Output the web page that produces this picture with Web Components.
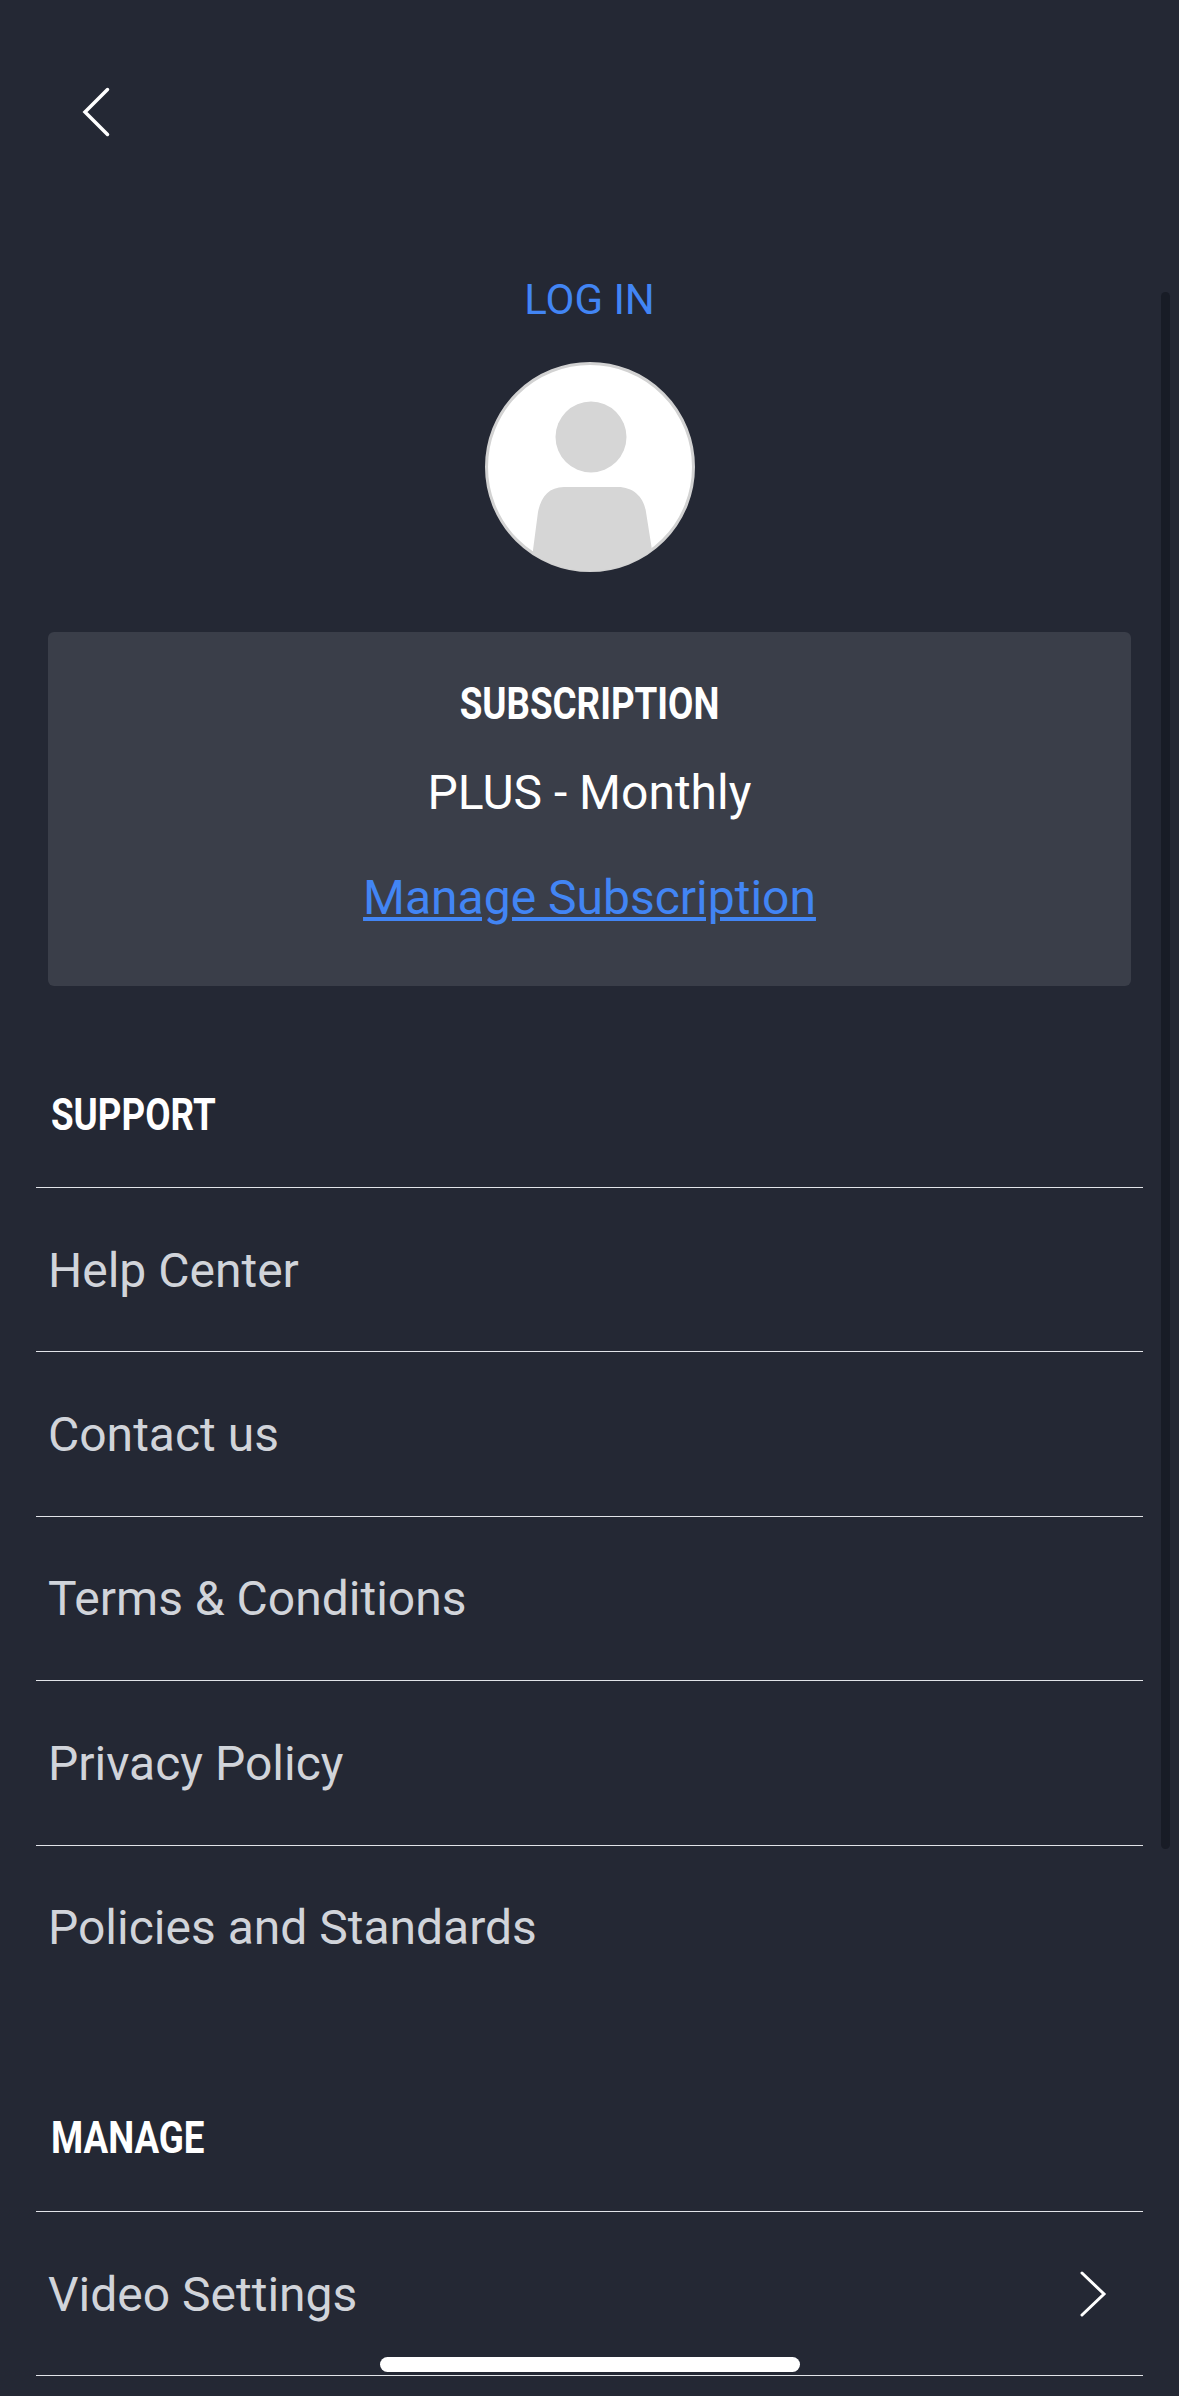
<!DOCTYPE html>
<html>
<head>
<meta charset="utf-8">
<title>Account</title>
<style>
  html, body { margin: 0; height: 100%; background: #242834; overflow: hidden; }
  body { font-family: Roboto, "Liberation Sans", sans-serif; }
</style>
</head>
<body>
<account-screen>
  <back-bar></back-bar>
  <profile-head></profile-head>
  <subscription-card plan="PLUS - Monthly"></subscription-card>
  <menu-section title="SUPPORT">
    <menu-row>Help Center</menu-row>
    <menu-row>Contact us</menu-row>
    <menu-row>Terms &amp; Conditions</menu-row>
    <menu-row>Privacy Policy</menu-row>
    <menu-row>Policies and Standards</menu-row>
  </menu-section>
  <menu-section title="MANAGE" class="manage">
    <menu-row arrow>Video Settings</menu-row>
    <menu-row></menu-row>
  </menu-section>
</account-screen>

<script>
// Scherm: vaste hoogte, inhoud loopt onderaan door
class AccountScreen extends HTMLElement {
  constructor() {
    super();
    this.attachShadow({ mode: 'open' });
  }

  connectedCallback() {
    this.shadowRoot.innerHTML = `
      <style>
        :host {
          display: block;
          position: relative;
          height: 2396px;
          overflow: hidden;
          background: #242834;
        }
        .scrollbar {
          position: absolute;
          left: 1161px;
          top: 292px;
          width: 9px;
          height: 1557px;
          border-radius: 5px;
          background: #181c26;
        }
        .home {
          position: absolute;
          left: 380px;
          top: 2357px;
          width: 420px;
          height: 15px;
          border-radius: 8px;
          background: #ffffff;
        }
      </style>
      <slot></slot>
      <div class="scrollbar"></div>
      <div class="home"></div>
    `;
  }
}

class BackBar extends HTMLElement {
  constructor() {
    super();
    this.attachShadow({ mode: 'open' });
  }

  connectedCallback() {
    this.shadowRoot.innerHTML = `
      <style>
        :host { display: block; padding: 86px 0 0 82px; height: 190px; box-sizing: border-box; }
        svg { display: block; }
      </style>
      <svg width="30" height="52" viewBox="0 0 30 52" fill="none" stroke="#ffffff" stroke-width="3.5" stroke-linecap="round" stroke-linejoin="miter">
        <path d="M25.5 3.5 L3 26 L25.5 48.5"/>
      </svg>
    `;
  }
}

class ProfileHead extends HTMLElement {
  constructor() {
    super();
    this.attachShadow({ mode: 'open' });
  }

  connectedCallback() {
    this.shadowRoot.innerHTML = `
      <style>
        :host { display: flex; flex-direction: column; align-items: center; }
        .login { font-size: 42px; line-height: 80px; height: 80px; margin-top: 70px; color: #4285f4; }
        svg { display: block; margin-top: 22px; }
      </style>
      <div class="login">LOG IN</div>
      <svg width="210" height="210" viewBox="0 0 210 210">
        <defs><clipPath id="av"><circle cx="105" cy="105" r="104"/></clipPath></defs>
        <circle cx="105" cy="105" r="103.5" fill="#ffffff" stroke="#d2d2d2" stroke-width="3"/>
        <g clip-path="url(#av)" fill="#d6d6d6">
          <circle cx="106" cy="75" r="35.5"/>
          <path d="M46 210 L48 188 L53 150 C56 135 64 125 79 125 L133 125 C148 125 159 135 161 150 L167 188 L168 210 Z"/>
        </g>
      </svg>
    `;
  }
}

class SubscriptionCard extends HTMLElement {
  constructor() {
    super();
    this.attachShadow({ mode: 'open' });
  }

  connectedCallback() {
    const plan = this.getAttribute('plan') || '';
    this.shadowRoot.innerHTML = `
      <style>
        :host {
          display: flex;
          flex-direction: column;
          align-items: center;
          box-sizing: border-box;
          width: 1083px;
          height: 354px;
          margin: 60px 0 0 48px;
          padding-top: 47px;
          border-radius: 6px;
          background: #3a3e49;
          color: #ffffff;
          text-align: center;
        }
        .title {
          font-size: 44px;
          line-height: 50px;
          font-weight: 700;
          transform: scaleX(.835);
          white-space: nowrap;
        }
        .plan { font-size: 48px; line-height: 56px; margin-top: 36px; }
        a { font-size: 48px; line-height: 56px; margin-top: 49px; color: #4285f4; text-decoration: underline; }
      </style>
      <div class="title">SUBSCRIPTION</div>
      <div class="plan">${plan}</div>
      <a href="#">Manage Subscription</a>
    `;
  }
}

class MenuSection extends HTMLElement {
  constructor() {
    super();
    this.attachShadow({ mode: 'open' });
  }

  connectedCallback() {
    const title = this.getAttribute('title') || '';
    this.shadowRoot.innerHTML = `
      <style>
        :host { display: block; margin: 0 36px; }
        h2 {
          margin: 0;
          padding: 104px 0 0 15px;
          height: 201px;
          box-sizing: border-box;
          font-size: 44px;
          line-height: 50px;
          font-weight: 700;
          color: #ffffff;
          transform: scaleX(.835);
          transform-origin: 15px 0;
          white-space: nowrap;
        }
        :host(.manage) h2 { height: 202px; }
      </style>
      <h2>${title}</h2>
      <slot></slot>
    `;
  }
}

class MenuRow extends HTMLElement {
  constructor() {
    super();
    this.attachShadow({ mode: 'open' });
  }

  connectedCallback() {
    const arrow = this.hasAttribute('arrow') ? `
      <svg width="30" height="46" viewBox="0 0 30 46" fill="none" stroke="#ffffff" stroke-width="3" stroke-linecap="round">
        <path d="M5 2 L27 23 L5 44"/>
      </svg>` : '';
    this.shadowRoot.innerHTML = `
      <style>
        :host {
          display: flex;
          align-items: center;
          justify-content: space-between;
          box-sizing: border-box;
          height: 164.4px;
          padding: 1px 36px 0 12px;
          border-top: 1px solid #e2e4e8;
          font-size: 48px;
          color: #d1d4da;
        }
        svg { display: block; }
      </style>
      <span><slot></slot></span>
      ${arrow}
    `;
  }
}

customElements.define('account-screen', AccountScreen);
customElements.define('back-bar', BackBar);
customElements.define('profile-head', ProfileHead);
customElements.define('subscription-card', SubscriptionCard);
customElements.define('menu-section', MenuSection);
customElements.define('menu-row', MenuRow);
</script>
</body>
</html>
